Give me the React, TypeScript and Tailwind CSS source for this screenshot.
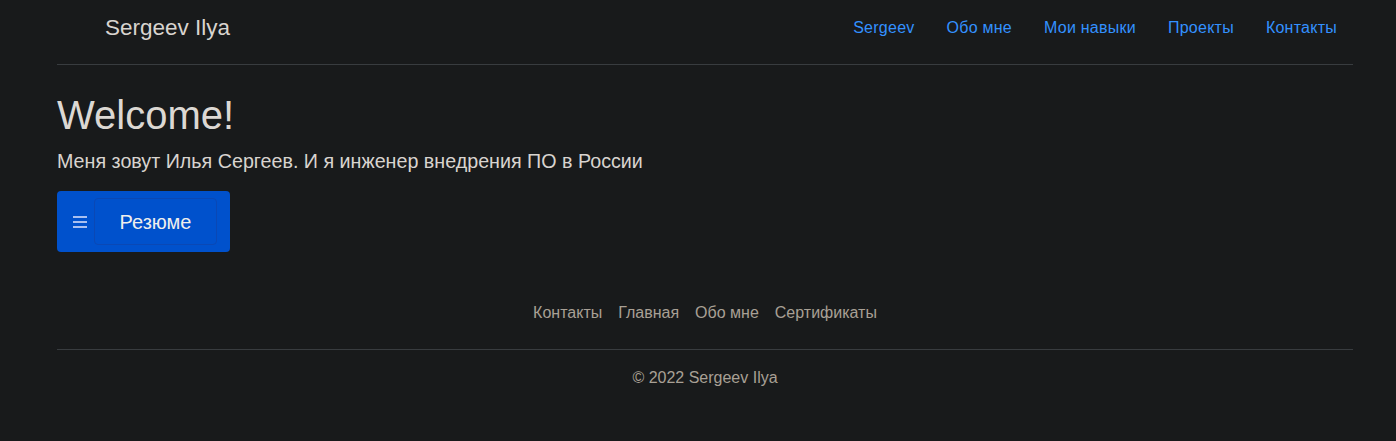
export default function App() {
  const navLinks = ['Sergeev', 'Обо мне', 'Мои навыки', 'Проекты', 'Контакты']
  const footerLinks = ['Контакты', 'Главная', 'Обо мне', 'Сертификаты']

  return (
    <div className="min-h-screen bg-[#181a1b] text-[#d8d4cf] font-['Liberation_Sans',Arial,sans-serif]">
      <div className="w-[1296px] ml-[57px]">
        {/* header */}
        <header className="flex items-center pt-2 pb-4 border-b border-[#383c3f]">
          <a href="#" className="flex items-center text-[22.5px] text-[#d8d4cf]">
            <span className="w-10 h-8 mr-2"></span>
            Sergeev Ilya
          </a>
          <ul className="ml-auto flex">
            {navLinks.map(link => (
              <li key={link}>
                <a href="#" className="block px-4 py-2 text-base leading-6 tracking-[0.25px] text-[#3391ff]">{link}</a>
              </li>
            ))}
          </ul>
        </header>

        {/* hero */}
        <main className="pt-[26px]">
          <h1 className="text-[40px] leading-[48px] font-medium text-[#dcd8d3] mb-[7px]">Welcome!</h1>
          <p className="text-[19.7px] leading-[30px] mb-[15px]">Меня зовут Илья Сергеев. И я инженер внедрения ПО в России</p>
          <div className="flex items-center w-[173px] h-[61px] pl-4 pr-[13px] bg-[#0051cc] rounded-[4px]">
            <span className="flex flex-col gap-[3px] w-[14px]">
              <span className="h-[2px] bg-[#a9c0f0]"></span>
              <span className="h-[2px] bg-[#a9c0f0]"></span>
              <span className="h-[2px] bg-[#a9c0f0]"></span>
            </span>
            <button className="ml-auto w-[123px] h-[47px] rounded-[4px] border border-[#0a48b5] text-[20px] text-[#f0efed]">
              Резюме
            </button>
          </div>
        </main>

        {/* footer */}
        <footer className="mt-[41px]">
          <ul className="flex justify-center pb-4 mb-4 border-b border-[#383c3f]">
            {footerLinks.map(link => (
              <li key={link}>
                <a href="#" className="block px-2 py-2 text-base leading-6 text-[#a8a095]">{link}</a>
              </li>
            ))}
          </ul>
          <p className="text-center text-base leading-6 text-[#a8a095]">© 2022 Sergeev Ilya</p>
        </footer>
      </div>
    </div>
  )
}
